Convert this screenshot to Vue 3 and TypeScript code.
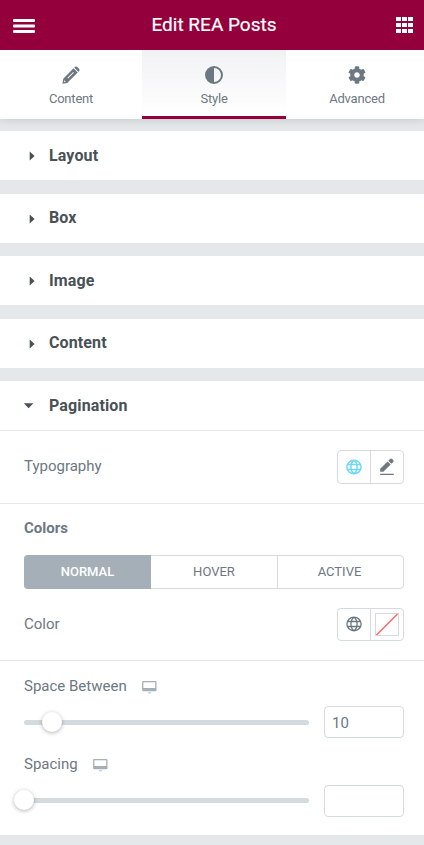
<script setup lang="ts">
import { ref } from 'vue'

interface Slider {
  label: string
  value: string
  position: number
  kind: string
}

const tabs = ['Content', 'Style', 'Advanced']
const activeTab = ref('Style')
const sections = ['Layout', 'Box', 'Image', 'Content']
const states = ['Normal', 'Hover', 'Active']
const activeState = ref('Normal')
const sliders = ref<Slider[]>([
  { label: 'Space Between', value: '10', position: 10, kind: 'between' },
  { label: 'Spacing', value: '', position: 0, kind: 'spacing' },
])
</script>

<template>
  <div class="panel">
    <header class="header">
      <svg class="menu" width="22" height="14" viewBox="0 0 22 14">
        <rect width="22" height="3" rx="1" y="0" />
        <rect width="22" height="3" rx="1" y="5.500" />
        <rect width="22" height="3" rx="1" y="11" />
      </svg>
      <h1>Edit REA Posts</h1>
      <svg class="apps" width="17" height="16" viewBox="0 0 17 16">
        <template v-for="y in 3" :key="y">
          <rect v-for="x in 3" :key="x" :x="(x - 1) * 6" :y="(y - 1) * 6" width="5" height="4" />
        </template>
      </svg>
    </header>

    <nav class="tabs">
      <button v-for="tab in tabs" :key="tab" class="tab" :class="{ active: tab === activeTab }" @click="activeTab = tab">
        <svg v-if="tab === 'Content'" width="18" height="18" viewBox="0 0 18 18">
          <path fill="currentColor" fill-rule="evenodd" d="M12.200 1.600 13.100.8q1-.8 2 0l2.100 2.100q.8 1 0 2l-.9.900zM11.500 2.300l4.200 4.200L5.200 16.900.4 17.700l.9-4.900zM2.400 14.300l-.4 1.800 1.800-.4zM5.500 11.800l.6.600 5.800-5.800-.6-.6z" />
        </svg>
        <svg v-else-if="tab === 'Style'" width="18" height="18" viewBox="0 0 18 18">
          <circle cx="9" cy="9" r="8" fill="none" stroke="currentColor" stroke-width="2" />
          <path fill="currentColor" d="M9 1a8 8 0 0 0 0 16z" />
        </svg>
        <svg v-else width="18" height="18" viewBox="0 0 512 512">
          <path fill="currentColor" d="M487.4 315.7l-42.600-24.600c4.300-23.200 4.300-47 0-70.200l42.600-24.600c4.900-2.800 7.100-8.600 5.500-14-11.100-35.600-30-67.800-54.700-94.600-3.800-4.100-10-5.100-14.800-2.300L380.800 110c-17.900-15.400-38.500-27.300-60.800-35.100V25.800c0-5.600-3.900-10.500-9.400-11.700-36.700-8.200-74.300-7.800-109.200 0-5.500 1.200-9.400 6.100-9.400 11.700V75c-22.200 7.900-42.800 19.800-60.800 35.100L88.700 85.500c-4.900-2.800-11-1.900-14.800 2.300-24.700 26.700-43.600 58.900-54.700 94.600-1.700 5.400.6 11.200 5.500 14L67.300 221c-4.300 23.200-4.300 47 0 70.200l-42.600 24.600c-4.900 2.800-7.100 8.600-5.500 14 11.100 35.600 30 67.800 54.700 94.600 3.800 4.100 10 5.100 14.800 2.300l42.600-24.600c17.900 15.400 38.500 27.300 60.800 35.100v49.200c0 5.600 3.900 10.500 9.400 11.700 36.700 8.200 74.300 7.800 109.200 0 5.500-1.200 9.400-6.100 9.400-11.700v-49.200c22.200-7.900 42.800-19.800 60.800-35.100l42.600 24.600c4.900 2.800 11 1.900 14.800-2.300 24.700-26.700 43.600-58.900 54.700-94.600 1.500-5.500-.7-11.300-5.600-14.100zM256 336c-44.100 0-80-35.900-80-80s35.900-80 80-80 80 35.900 80 80-35.900 80-80 80z" />
        </svg>
        <span>{{ tab }}</span>
      </button>
    </nav>

    <main>
      <section v-for="name in sections" :key="name" class="section" :class="'section-' + name.toLowerCase()">
        <h2 class="heading">
          <svg width="9" height="10" viewBox="0 0 9 10"><path d="M1.700.5v9L6.600 5z" /></svg>
          <span>{{ name }}</span>
        </h2>
      </section>

      <section class="section open">
        <h2 class="heading">
          <svg width="9" height="10" viewBox="0 0 9 10"><path d="M-.2 2.300h9.600L4.600 7.200z" /></svg>
          <span>Pagination</span>
        </h2>

        <div class="control typography">
          <span class="label">Typography</span>
          <div class="pair">
            <button class="global">
              <svg width="16" height="16" viewBox="0 0 16 16"><path d="M8 1.200C4 1.200.9 4.200.9 8s3.100 6.800 7.100 6.800 7.100-3 7.100-6.800S12 1.200 8 1.200zM1.500 5.500h13M1.500 10.500h13M8 1.200C3.900 4.200 3.900 11.800 8 14.800c4.100-3 4.100-10.600 0-13.600z" /></svg>
            </button>
            <button>
              <svg class="edit" width="16" height="18" viewBox="0 0 16 18">
                <path d="M1.200 10.700 8.600 3.400l3.100 3.100-7.400 7.300H1.200zM9.300 2.700l1.800-1.800q1.100-.8 2.100.1l1 1q.8 1 0 2L12.400 5.800zM1.200 15.700h13.600v1.200H1.200z" />
              </svg>
            </button>
          </div>
        </div>

        <div class="colors">
          <h3>Colors</h3>
          <div class="states">
            <button v-for="state in states" :key="state" :class="{ active: state === activeState }" @click="activeState = state">{{ state }}</button>
          </div>
          <div class="color-row">
            <span class="label">Color</span>
            <div class="pair short">
              <button class="global">
                <svg width="16" height="16" viewBox="0 0 16 16"><path d="M8 1.200C4 1.200.9 4.200.9 8s3.100 6.800 7.100 6.800 7.100-3 7.100-6.800S12 1.200 8 1.200zM1.500 5.500h13M1.500 10.500h13M8 1.200C3.900 4.200 3.900 11.800 8 14.800c4.100-3 4.100-10.600 0-13.600z" /></svg>
              </button>
              <button>
                <svg class="swatch" width="24" height="23" viewBox="0 0 24 23">
                  <rect x=".5" y=".5" width="23" height="22" />
                  <path d="M1.500 22 22.500 1" />
                </svg>
              </button>
            </div>
          </div>
        </div>

        <div class="sliders">
          <div v-for="item in sliders" :key="item.kind" class="slider" :class="item.kind">
            <div class="slider-label">
              <span class="label">{{ item.label }}</span>
              <svg width="15" height="13" viewBox="0 0 15 13">
                <path fill-rule="evenodd" d="M1.300 0h12Q14.500 0 14.500 1v8.300q0 1-1.200 1h-12q-1.200 0-1.200-1V1q0-1 1.200-1zM1.400 1.200v5.900h11.800V1.200zM5.800 11.400h3.600q-.3.900-1 .9H6.800q-.7 0-1-.9z" />
              </svg>
            </div>
            <div class="slider-body">
              <div class="track"><i class="thumb" :style="{ left: item.position + '%' }"></i></div>
              <input v-model="item.value" type="text" :aria-label="item.label">
            </div>
          </div>
        </div>
      </section>
    </main>
  </div>
</template>

<style>
body {
  margin: 0;
  overflow: hidden;
  background: #e4e8eb;
}
</style>

<style scoped>
* {
  box-sizing: border-box;
}
.panel {
  width: 424px;
  height: 845px;
  overflow: hidden;
  background: #e4e8eb;
  color: #6d7882;
  font-family: Roboto, "Liberation Sans", sans-serif;
}
h1, h2, h3 {
  margin: 0;
}
button {
  margin: 0;
  padding: 0;
  border: 0;
  background: none;
  color: inherit;
  font: inherit;
}
svg {
  display: block;
  flex: none;
}
.header {
  position: relative;
  z-index: 1;
  display: flex;
  align-items: center;
  justify-content: space-between;
  height: 50px;
  padding: 0 11px 0 13px;
  background: #93003c;
  color: #fff;
}
.header svg {
  fill: #fff;
}
.menu {
  margin-top: 2px;
}
.header h1 {
  margin-right: 3px;
  font-size: 19px;
  font-weight: 400;
  -webkit-text-stroke: .2px #fff;
  line-height: 48px;
}
.tabs {
  display: grid;
  grid-template-columns: 142px 144px 143px;
  height: 69px;
  background: #fff;
  box-shadow: 0 1px 9px rgba(0, 0, 0, .13);
}
.tab {
  display: flex;
  flex-direction: column;
  align-items: center;
  gap: 7px;
  padding-top: 16px;
  border-bottom: 3px solid transparent;
  font-size: 13px;
  letter-spacing: -.2px;
  line-height: 16px;
}
.tab:last-child {
  padding-right: 1px;
}
.tab.active {
  border-color: #93003c;
  background: linear-gradient(#f1f2f4, #fff);
}
main {
  padding-top: 12px;
}
.section {
  height: 49px;
  margin-bottom: 14px;
  background: #fff;
}
.section-box, .section-content {
  margin-bottom: 13px;
}
.section.open {
  height: 454px;
  margin: 0;
}
.heading {
  display: flex;
  align-items: center;
  gap: 16px;
  height: 49px;
  padding-left: 24px;
  color: #495157;
  font-size: 16px;
  font-weight: 700;
  letter-spacing: .12px;
}
.section-box .heading span, .section-content .heading span {
  margin-bottom: 2px;
}
.heading svg {
  width: 9px;
  overflow: visible;
  fill: #495157;
}
.section:not(.open) .heading svg {
  margin: 0 -4px 0 4px;
}
.label {
  font-size: 15px;
  line-height: 20px;
}
.control {
  display: flex;
  align-items: center;
  justify-content: space-between;
  height: 74px;
  padding: 0 20px 0 24px;
  border: solid #e4e8eb;
  border-width: 1px 0;
}
.typography .label {
  margin-top: -2px;
}
.pair {
  display: grid;
  grid-template-columns: 32px 33px;
  width: 67px;
  height: 34px;
  border: 1px solid #d5dadf;
  border-radius: 4px;
}
.pair.short {
  height: 33px;
}
.pair button {
  display: flex;
  align-items: center;
  justify-content: center;
}
.pair button + button {
  border-left: 1px solid #d5dadf;
}
.pair .global svg {
  fill: none;
  stroke: #6d7882;
  stroke-width: 1.3;
}
.pair.short .global svg {
  margin-top: -1px;
}
.typography .global svg {
  stroke: #71d7f7;
  stroke-width: 1.5;
}
.edit {
  fill: #6d7882;
}
.swatch rect {
  fill: #fff;
  stroke: #d5dadf;
}
.swatch path {
  stroke: #ff6464;
  stroke-width: 1.5;
}
.colors {
  height: 157px;
  padding: 14px 20px 0 24px;
  border-bottom: 1px solid #e4e8eb;
}
.colors h3 {
  height: 37px;
  font-size: 15px;
  font-weight: 700;
  line-height: 20px;
}
.states {
  display: grid;
  grid-template-columns: 126px 126px 126px;
  height: 34px;
  border: 1px solid #d5dadf;
  border-radius: 4px;
}
.states button {
  padding-bottom: 2px;
  border-left: 1px solid #d5dadf;
  font-size: 13px;
  text-transform: uppercase;
}
.states button:first-child {
  border-left: 0;
}
.states button:last-child {
  padding-right: 2px;
}
.states .active {
  margin: -1px 0 -1px -1px;
  border-radius: 4px 0 0 4px;
  background: #a4afb7;
  color: #fff;
  font-weight: 500;
}
.states .active + button {
  border-left: 0;
}
.color-row {
  display: flex;
  align-items: center;
  justify-content: space-between;
  height: 33px;
  margin-top: 19px;
}
.color-row .label {
  margin-top: -2px;
}
.sliders {
  padding: 15px 20px 0 24px;
}
.slider {
  height: 78px;
}
.slider-label {
  display: flex;
  align-items: center;
  gap: 15px;
  height: 20px;
}
.slider-label svg {
  margin-top: 2px;
  fill: #a4afb7;
}
.slider-body {
  display: flex;
  align-items: center;
  justify-content: space-between;
  height: 32px;
  margin-top: 10px;
}
.spacing .slider-body {
  margin-top: 11px;
}
.track {
  position: relative;
  width: 285px;
  height: 5px;
  border-radius: 3px;
  background: #d5dadf;
}
.between .track {
  margin-top: 1px;
}
.spacing .track {
  margin-top: -1px;
}
.thumb {
  position: absolute;
  top: -8px;
  width: 20px;
  height: 20px;
  margin-left: -10.200px;
  border-radius: 50%;
  background: #fff;
  box-shadow: 0 1px 4px rgba(0, 0, 0, .3);
}
.slider-body input {
  width: 80px;
  height: 32px;
  margin: 0;
  padding: 2px 7px 0;
  border: 1px solid #d5dadf;
  border-radius: 4px;
  outline: 0;
  background: #fff;
  color: #6d7882;
  font: 15px Roboto, "Liberation Sans", sans-serif;
}
</style>
